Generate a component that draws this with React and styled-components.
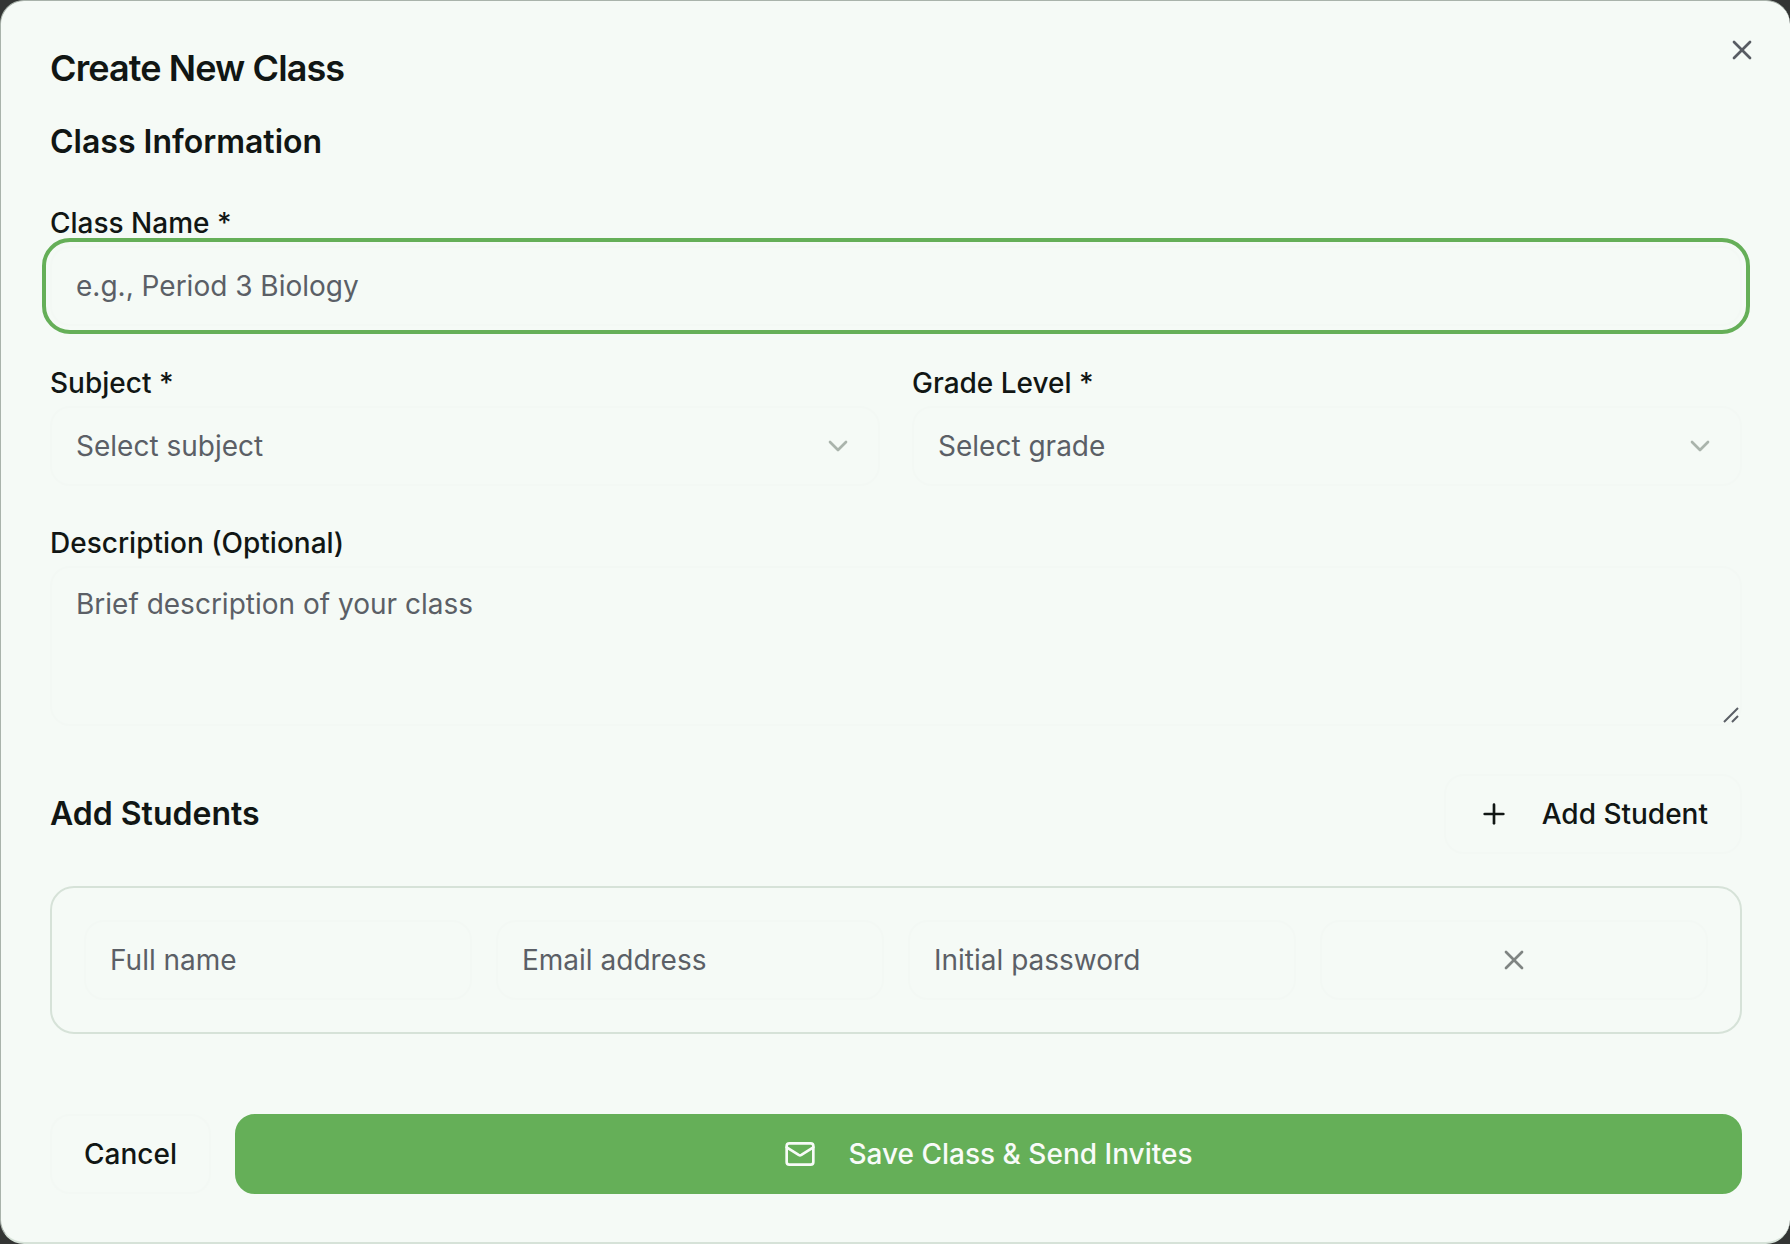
import { useState } from "react"
import styled, { createGlobalStyle } from "styled-components"
import { ChevronDown, Mail, Plus, X } from "lucide-react"

const GlobalStyle = createGlobalStyle`
  *, *::before, *::after {
    box-sizing: border-box;
  }

  body {
    margin: 0;
    background: #333534;
    color: #111614;
    font-family: Inter, "Liberation Sans", sans-serif;
    font-size: 28px;
    line-height: 48px;
    -webkit-font-smoothing: antialiased;
  }

  button, input, select, textarea {
    font: inherit;
    color: inherit;
  }
`

const Dialog = styled.main`
  position: relative;
  display: flex;
  flex-direction: column;
  gap: 32px;
  min-height: 100vh;
  padding: 49px 48px 48px 49px;
  border: solid #a9b3ab;
  border-width: 1px 0 2px 1px;
  border-bottom-color: #d6e2d8;
  border-radius: 24px;
  background: #f5faf6;
`

const Title = styled.h1`
  margin: 0;
  font-size: 36px;
  line-height: 36px;
  font-weight: 600;
  letter-spacing: -0.025em;
`

const SectionTitle = styled.h2`
  margin: 0;
  font-size: 32px;
  line-height: 48px;
  font-weight: 600;
`

const CloseButton = styled.button`
  position: absolute;
  top: 33px;
  right: 32px;
  display: flex;
  padding: 0;
  border: none;
  background: none;
  color: #585c63;
  cursor: pointer;
`

const Form = styled.form`
  display: flex;
  flex-direction: column;
  gap: 48px;
`

const Section = styled.section`
  display: flex;
  flex-direction: column;
  gap: 32px;
`

const Columns = styled.div`
  display: grid;
  grid-template-columns: 1fr 1fr;
  gap: 32px;
`

const Field = styled.div`
  display: flex;
  flex-direction: column;
`

const Label = styled.label`
  padding-top: 2px;
  line-height: 46px;
  font-weight: 500;
`

const Input = styled.input`
  width: 100%;
  min-width: 0;
  height: 80px;
  padding: 0 24px;
  border: 2px solid #f3f8f4;
  border-radius: 20px;
  background: #f5faf6;
  outline: ${({ $ring }) => ($ring ? "4px solid #65af58" : "none")};
  outline-offset: 4px;

  &::placeholder {
    color: #5b5f66;
    opacity: 1;
  }
`

const Control = styled.div`
  position: relative;
  display: flex;

  svg {
    position: absolute;
    pointer-events: none;
  }

  .chevron {
    top: 24px;
    right: 26px;
    color: #aab4ac;
  }

  .grip {
    right: 2px;
    bottom: 2px;
    color: #5b5f66;
  }
`

const Select = styled.select`
  width: 100%;
  height: 80px;
  padding: 0 72px 0 24px;
  border: 2px solid #f3f8f4;
  border-radius: 20px;
  background: #f5faf6;
  color: #5b5f66;
  appearance: none;
`

const TextArea = styled.textarea`
  width: 100%;
  height: 160px;
  padding: 16px 24px;
  border: 2px solid #f3f8f4;
  border-radius: 20px;
  background: #f5faf6;
  line-height: 40px;
  resize: vertical;

  &::placeholder {
    color: #5b5f66;
    opacity: 1;
  }

  &::-webkit-resizer {
    background: transparent;
  }
`

const SectionHeader = styled.div`
  display: flex;
  align-items: center;
  justify-content: space-between;
`

const Button = styled.button`
  display: flex;
  align-items: center;
  justify-content: center;
  gap: 32px;
  height: 80px;
  padding: 0 32px;
  border: 2px solid ${({ $primary }) => ($primary ? "#65af58" : "#f3f8f4")};
  border-radius: 20px;
  background: ${({ $primary }) => ($primary ? "#65af58" : "#f5faf6")};
  color: ${({ $primary }) => ($primary ? "#f8fbf8" : "#111614")};
  flex: ${({ $primary }) => ($primary ? "1" : "none")};
  font-weight: 500;
  cursor: pointer;

  &:disabled {
    color: #7f8482;
    cursor: default;
  }
`

const StudentList = styled.div`
  display: flex;
  flex-direction: column;
  gap: 24px;
`

const StudentRow = styled.div`
  display: grid;
  grid-template-columns: repeat(4, 1fr);
  gap: 24px;
  padding: 32px;
  border: 2px solid #d6e2d8;
  border-radius: 24px;
`

const Footer = styled.footer`
  display: flex;
  gap: 24px;
  padding-top: 32px;
`

const SelectField = ({ id, label, placeholder, options }) => (
  <Field>
    <Label htmlFor={id}>{label}</Label>
    <Control>
      <Select id={id} defaultValue="">
        <option value="">{placeholder}</option>
        {options.map((option) => (
          <option key={option} value={option}>{option}</option>
        ))}
      </Select>
      <ChevronDown size={32} className="chevron" />
    </Control>
  </Field>
)

const App = () => {
  const [students, setStudents] = useState([1])

  const addStudent = () => setStudents([...students, students[students.length - 1] + 1])
  const removeStudent = (id) => setStudents(students.filter((s) => s !== id))

  return (
    <>
      <GlobalStyle />
      <Dialog role="dialog" aria-labelledby="dialog-title">
        <Title id="dialog-title">Create New Class</Title>
        <CloseButton type="button" aria-label="Close">
          <X size={32} />
        </CloseButton>

        <Form onSubmit={(e) => e.preventDefault()}>
          <Section>
            <SectionTitle>Class Information</SectionTitle>
            <Field>
              <Label htmlFor="class-name">Class Name *</Label>
              <Input id="class-name" placeholder="e.g., Period 3 Biology" $ring />
            </Field>
            <Columns>
              <SelectField id="subject" label="Subject *" placeholder="Select subject" options={["Biology", "Chemistry", "Mathematics"]} />
              <SelectField id="grade" label="Grade Level *" placeholder="Select grade" options={["9th Grade", "10th Grade", "11th Grade"]} />
            </Columns>
            <Field>
              <Label htmlFor="description">Description (Optional)</Label>
              <Control>
                <TextArea id="description" placeholder="Brief description of your class" />
                <svg className="grip" width="18" height="18" viewBox="0 0 18 18" fill="none" stroke="currentColor" strokeWidth="2">
                  <path d="M2 16 16 2M10 16l6-6" />
                </svg>
              </Control>
            </Field>
          </Section>

          <Section>
            <SectionHeader>
              <SectionTitle>Add Students</SectionTitle>
              <Button type="button" onClick={addStudent}>
                <Plus size={32} />
                Add Student
              </Button>
            </SectionHeader>
            <StudentList>
              {students.map((id) => (
                <StudentRow key={id}>
                  <Input aria-label="Full name" placeholder="Full name" />
                  <Input type="email" aria-label="Email address" placeholder="Email address" />
                  <Input type="password" aria-label="Initial password" placeholder="Initial password" />
                  <Button type="button" aria-label="Remove student" disabled={students.length === 1} onClick={() => removeStudent(id)}>
                    <X size={32} />
                  </Button>
                </StudentRow>
              ))}
            </StudentList>
          </Section>

          <Footer>
            <Button type="button">Cancel</Button>
            <Button type="submit" $primary>
              <Mail size={32} />
              Save Class &amp; Send Invites
            </Button>
          </Footer>
        </Form>
      </Dialog>
    </>
  )
}

export default App
